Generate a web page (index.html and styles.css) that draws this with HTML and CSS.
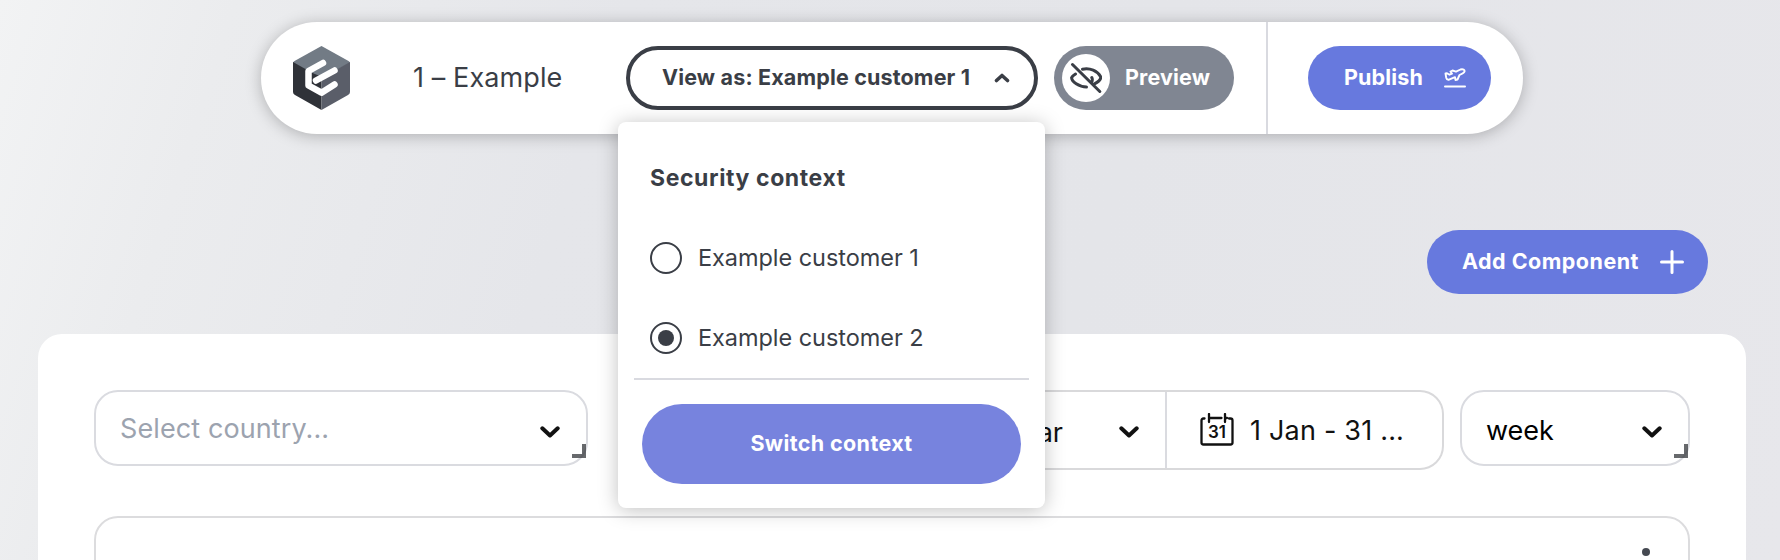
FILE: index.html
```html
<!DOCTYPE html>
<html lang="en">
<head>
<meta charset="utf-8">
<title>1 – Example</title>
<link rel="stylesheet" href="styles.css">
</head>
<body>
<div class="app">
  <header class="toolbar">
    <svg class="logo" viewBox="0 0 57 64">
      <path d="M28.5 0 55.500 15Q57 16 57 17L28.500 32 0 17Q0 16 1.500 15Z" fill="#727b85"/>
      <path d="M0 16 28.5 32V64L2 49Q0 48 0 46Z" fill="#2f3238"/>
      <path d="M57 16 28.5 32V64L55 49Q57 48 57 46Z" fill="#5a5e69"/>
      <path d="M19 27V34.500L27 30Z" fill="#2f3238"/>
      <path d="M30 17 15.500 25V39.500L28.500 46.700 41.500 38.500M23 34.500 41.500 24.500" fill="none" stroke="#fff" stroke-width="6.500" stroke-linecap="round" stroke-linejoin="round"/>
    </svg>
    <h1 class="title"><span>1 – Example</span></h1>
    <button class="view-as"><span class="view-label">View as: Example customer 1</span>
      <svg class="caret" viewBox="0 0 16 10"><path d="M2.500 7.500 8 2.500 13.500 7.500"/></svg>
    </button>
    <button class="preview">
      <span class="knob"><svg viewBox="0 0 32 32"><path d="M12.500 7.200C20 5.500 27.500 9 30.500 14.500 31.200 16.500 29 19.500 24.500 21.800M5.500 12C3.500 13.200 2.200 14.500 1.600 15.700 1.500 19.500 9 25 16.500 25M21.800 15.500Q23 18 21.500 20.500M2.500 2.500 29.800 29.500"/></svg></span>
      <span class="preview-label">Preview</span>
    </button>
    <div class="publish-area">
      <button class="publish"><span class="publish-label">Publish</span>
        <svg class="plane" viewBox="0 0 22 20"><path d="M1.500 5.500 3 5.200 5.500 6.700 8 5.700 6.500 3.500 8.500 2.500 12 3.700 16.500 1.500C19 .6 21 2 20.500 3.500 20.200 4.800 18 5.900 15.500 7L13.500 11.500 11.500 12 11 9.200 5 11.700C3.500 12 2.600 11.200 2.200 9.700Z" stroke-width="1.900"/><path d="M1 18.500H21" stroke-width="2"/></svg>
      </button>
    </div>
    <section class="menu">
      <h2 class="menu-title"><span>Security context</span></h2>
      <label class="option"><i class="radio"></i><span>Example customer 1</span></label>
      <label class="option"><i class="radio checked"></i><span>Example customer 2</span></label>
      <hr class="rule">
      <button class="switch"><span>Switch context</span></button>
    </section>
  </header>
  <div class="actions">
    <button class="add"><span class="add-label">Add Component</span>
      <svg class="plus" viewBox="0 0 24 24"><path d="M12 1.500V22.500M1.500 12H22.500"/></svg>
    </button>
  </div>
  <main class="panel">
    <div class="filters">
      <div class="field country"><span class="placeholder">Select country...</span>
        <svg class="chevron" viewBox="0 0 20 12"><path d="M2.300 2.300 10 9.500 17.700 2.300"/></svg><i class="grip"></i></div>
      <div class="field range">
        <div class="preset"><span class="preset-label">This year</span><svg class="chevron" viewBox="0 0 20 12"><path d="M2.300 2.300 10 9.500 17.700 2.300"/></svg></div>
        <div class="dates">
          <svg class="calendar" viewBox="0 0 34 34"><path d="M4.500 5.500H3.500Q1.500 5.500 1.500 7.500V29.500Q1.500 31.500 3.500 31.500H30.500Q32.500 31.500 32.500 29.500V7.500Q32.500 5.500 30.500 5.500H29M9 1V9M25 1V9M9 5H21.500M25 5H27"/><text x="17" y="25">31</text></svg>
          <span class="dates-label">1 Jan - 31 ...</span>
        </div>
      </div>
      <div class="field week"><span class="week-label">week</span>
        <svg class="chevron" viewBox="0 0 20 12"><path d="M2.300 2.300 10 9.500 17.700 2.300"/></svg><i class="grip"></i></div>
    </div>
    <section class="card"><i class="dot"></i></section>
  </main>
</div>
</body>
</html>
```
FILE: styles.css
```css
* { box-sizing: border-box; }
body { margin: 0; font-family: Inter, "Liberation Sans", sans-serif; color: #3a3e46; }
button { font: inherit; border: 0; margin: 0; padding: 0; text-align: left; }
span { white-space: nowrap; }
svg { display: block; flex: none; fill: none; stroke-linecap: round; stroke-linejoin: round; }
.app {
  width: 1780px; height: 560px; overflow: hidden; padding-top: 22px;
  background: linear-gradient(108deg, #f2f3f4 0, #ebecee 12%, #e5e6ea 32%, #e4e5e9 60%, #e7e7eb 100%);
}
.toolbar {
  position: relative; z-index: 2; display: flex; align-items: center;
  width: 1262px; height: 112px; margin-left: 261px; padding-left: 32px;
  border-radius: 56px; background: #fff; box-shadow: 0 2px 16px rgba(0, 0, 0, .25);
}
.logo { width: 57px; height: 64px; }
.title { width: 213px; margin: 0 0 0 63px; font-size: 27px; font-weight: 400; line-height: 34px; letter-spacing: .1px; }
.view-as {
  display: flex; align-items: center; width: 412px; height: 64px; padding-left: 32px;
  border: 4px solid #3a3e46; border-radius: 32px; background: #fff; color: #3a3e46;
}
.view-label, .preview-label, .publish-label, .add-label, .switch span { padding-bottom: 2px; font-size: 21.500px; font-weight: 700; line-height: 28px; }
.view-label { width: 332px; letter-spacing: .16px; }
.caret { width: 16px; height: 10px; stroke: #3a3e46; stroke-width: 3.600; }
.preview {
  display: flex; align-items: center; gap: 15px; width: 180px; height: 64px; margin-left: 16px;
  padding-left: 8px; border-radius: 32px; background: #808692; color: #fff;
}
.preview-label { letter-spacing: .15px; }
.knob { display: grid; place-items: center; width: 48px; height: 48px; border-radius: 50%; background: #fff; }
.knob svg { width: 32px; height: 32px; stroke: #3a3e46; stroke-width: 3; }
.publish-area {
  display: flex; align-items: center; height: 112px; margin-left: 32px; padding-left: 40px;
  border-left: 2px solid #d9dae0;
}
.publish { display: flex; align-items: center; width: 183px; height: 64px; padding-left: 36px; border-radius: 32px; background: #6779de; color: #fff; }
.publish-label { width: 100px; letter-spacing: .15px; }
.plane { width: 22px; height: 20px; stroke: #fff; }
.menu {
  position: absolute; left: 357px; top: 100px; width: 427px; height: 386px; padding: 32px 16px 24px;
  border-radius: 8px; background: #fff; box-shadow: 0 2px 20px rgba(0, 0, 0, .25);
}
.menu-title { margin: 8px 0 0 16px; font-size: 23px; font-weight: 700; line-height: 32px; letter-spacing: .6px; }
.option { display: flex; align-items: center; gap: 16px; height: 32px; margin: 48px 0 0 16px; font-size: 23.500px; line-height: 32px; letter-spacing: -.05px; }
.radio { display: grid; place-items: center; width: 32px; height: 32px; border: 2.500px solid #3a3e46; border-radius: 50%; }
.checked::after { content: ""; width: 16px; height: 16px; border-radius: 50%; background: #3a3e46; }
.rule { height: 2px; margin: 24px 0; border: 0; background: #d9dae0; }
.switch { display: grid; place-items: center; width: 379px; height: 80px; margin-left: 8px; border-radius: 40px; background: #7783de; color: #fff; }
.switch span { letter-spacing: .38px; }
.actions { display: flex; justify-content: flex-end; padding: 96px 72px 40px 0; }
.add { display: flex; align-items: center; width: 281px; height: 64px; padding-left: 35px; border-radius: 32px; background: #6779de; color: #fff; }
.add-label { width: 198px; letter-spacing: .48px; }
.plus { width: 24px; height: 24px; stroke: #fff; stroke-width: 3; }
.panel { width: 1708px; height: 240px; margin-left: 38px; padding: 56px 56px 0; border-radius: 24px 24px 0 0; background: #fff; color: #111; }
.filters { display: flex; align-items: flex-start; height: 126px; }
.field { position: relative; display: flex; align-items: center; height: 76px; border: 2px solid #dadbe0; border-radius: 24px; background: #fff; font-size: 27px; }
.country { width: 494px; padding-left: 24px; }
.placeholder { width: 420px; color: #9ca3af; letter-spacing: .1px; }
.chevron { width: 20px; height: 12px; margin-top: 8px; stroke: #111; stroke-width: 4; }
.grip { position: absolute; right: 0; bottom: 6px; width: 14px; height: 14px; border: solid rgba(52, 55, 59, .75); border-width: 0 4px 4px 0; }
.range { width: 814px; height: 80px; margin-left: 42px; border-color: #d9d9db; border-left: 0; border-radius: 0 24px 24px 0; }
.preset { display: flex; align-items: center; justify-content: flex-end; width: 537px; height: 76px; padding-right: 26px; border-right: 2px solid #dadbe0; }
.preset-label { margin: 4px 56px 0 0; }
.preset .chevron { margin-top: 4px; }
.dates { display: flex; align-items: center; padding-left: 33px; }
.calendar { width: 34px; height: 34px; stroke: #111; stroke-width: 2.300; }
.calendar text { font: 600 17px Inter, sans-serif; text-anchor: middle; fill: #111; stroke: none; }
.dates-label { margin-left: 16px; letter-spacing: .2px; }
.week { width: 230px; margin-left: 16px; padding-left: 24px; }
.week-label { width: 156px; margin-top: 5px; color: #000; }
.card { height: 80px; padding: 30px 38px; border: 2px solid #dcdcde; border-radius: 24px; display: flex; justify-content: flex-end; }
.dot { width: 8px; height: 8px; border-radius: 50%; background: #454951; }
```
